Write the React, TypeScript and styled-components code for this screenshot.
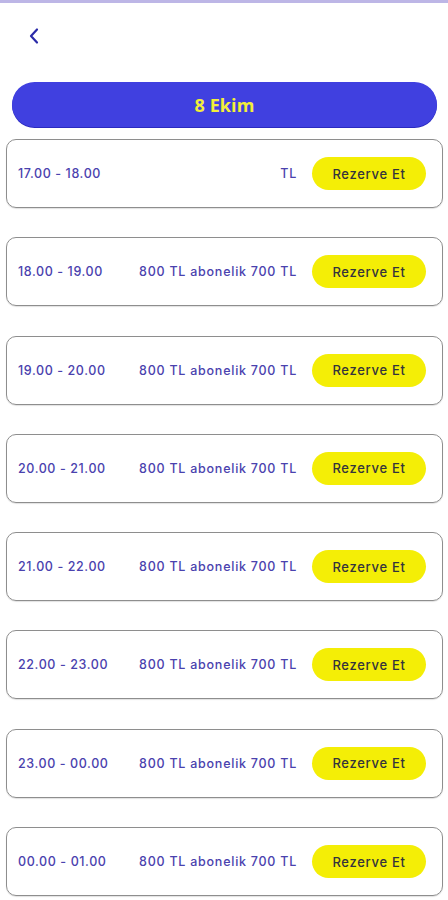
import React from "react";
import styled, { createGlobalStyle } from "styled-components";

const Global = createGlobalStyle`
  html, body { margin: 0; padding: 0; background: #ffffff; }
  body { font-family: Inter, "Open Sans", sans-serif; }
  * { box-sizing: border-box; }
`;

const Page = styled.div`
  width: 448px;
  min-height: 900px;
  background: #fff;
  display: flex;
  flex-direction: column;
`;

const TopLine = styled.div`
  height: 3px;
  background: #bdb6e6;
`;

const Header = styled.div`
  height: 69px;
  display: flex;
  align-items: center;
  padding-left: 26px;
  padding-bottom: 3px;
`;

const BackButton = styled.button`
  border: none;
  background: transparent;
  padding: 0;
  width: 16px;
  height: 20px;
  display: flex;
  align-items: center;
  justify-content: center;
  cursor: pointer;
`;

const DatePill = styled.div`
  margin: 10px 11px 0 12px;
  height: 45px;
  border-radius: 23px;
  background: #4040e0;
  box-shadow: 0 1px 0 #2a2ac0;
  display: flex;
  align-items: center;
  justify-content: center;
  color: #f2ee3a;
  font-family: "Open Sans", sans-serif;
  font-weight: 700;
  font-size: 18px;
  letter-spacing: 0.1px;
`;

const List = styled.div`
  margin: 12px 5px 0 6px;
  display: flex;
  flex-direction: column;
  gap: 29.3px;
`;

const Card = styled.div`
  height: 69px;
  border: 1px solid #8e8e8e;
  border-radius: 10px;
  display: flex;
  align-items: center;
  padding: 0 16px 0 11px;
  box-shadow: 0 1px 1px rgba(0, 0, 0, 0.12);
`;

const Time = styled.span`
  color: #4a42ae;
  font-family: Inter, sans-serif;
  font-size: 12.5px;
  font-weight: 500;
  letter-spacing: 0.6px;
  flex: 1;
`;

const Price = styled.span`
  color: #4a42ae;
  font-family: Inter, sans-serif;
  font-size: 12.5px;
  font-weight: 500;
  letter-spacing: 0.75px;
  margin-right: 15px;
  white-space: nowrap;
`;

const ReserveButton = styled.button`
  width: 114px;
  height: 33px;
  border: none;
  border-radius: 17px;
  background: #f4ee06;
  color: #33333d;
  font-family: Inter, sans-serif;
  font-size: 13px;
  font-weight: 500;
  letter-spacing: 0.7px;
  display: flex;
  align-items: center;
  justify-content: center;
  padding: 0;
  cursor: pointer;
`;

const slots = [
  { time: "17.00 - 18.00", price: "TL" },
  { time: "18.00 - 19.00", price: "800 TL abonelik 700 TL" },
  { time: "19.00 - 20.00", price: "800 TL abonelik 700 TL" },
  { time: "20.00 - 21.00", price: "800 TL abonelik 700 TL" },
  { time: "21.00 - 22.00", price: "800 TL abonelik 700 TL" },
  { time: "22.00 - 23.00", price: "800 TL abonelik 700 TL" },
  { time: "23.00 - 00.00", price: "800 TL abonelik 700 TL" },
  { time: "00.00 - 01.00", price: "800 TL abonelik 700 TL" },
];

export default function App() {
  return (
    <>
      <Global />
      <Page>
        <TopLine />
        <Header>
          <BackButton aria-label="Geri">
            <svg width="12" height="18" viewBox="0 0 12 18" fill="none">
              <path
                d="M9 2.5 L3 9 L9 15.5"
                stroke="#2a2aa8"
                strokeWidth="2.2"
                strokeLinecap="round"
                strokeLinejoin="round"
              />
            </svg>
          </BackButton>
        </Header>
        <DatePill>8 Ekim</DatePill>
        <List>
          {slots.map((s) => (
            <Card key={s.time}>
              <Time>{s.time}</Time>
              <Price>{s.price}</Price>
              <ReserveButton>Rezerve Et</ReserveButton>
            </Card>
          ))}
        </List>
      </Page>
    </>
  );
}
